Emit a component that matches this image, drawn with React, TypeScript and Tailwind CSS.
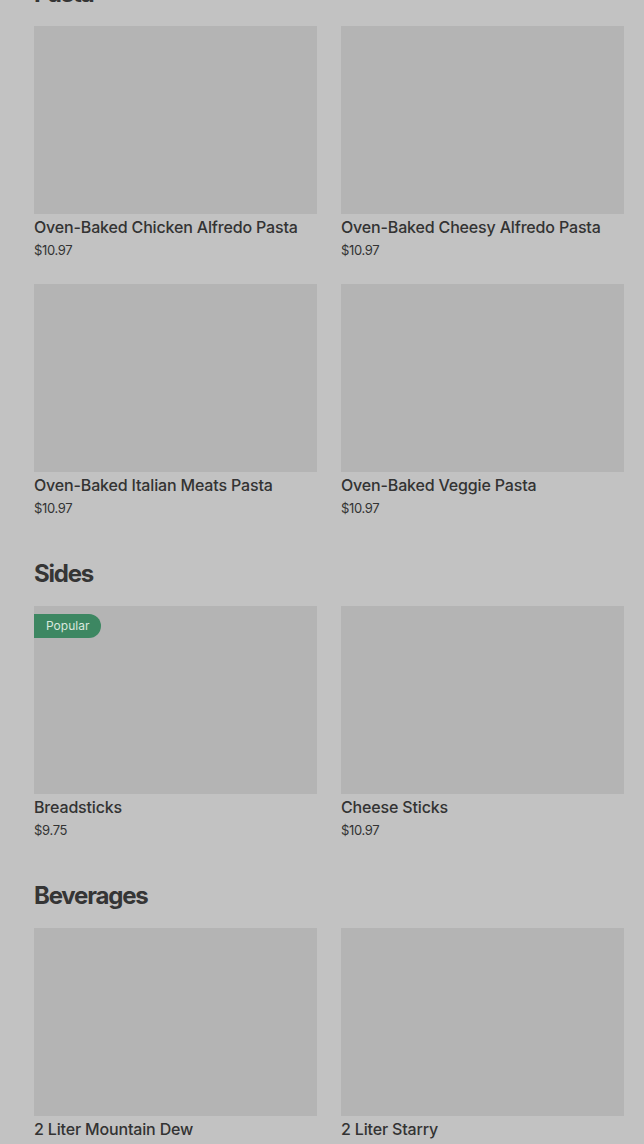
import React from "react";

type Item = { name: string; price: string; badge?: string };

const sections: { title: string; items: Item[] }[] = [
    {
        title: "Pasta",
        items: [
            { name: "Oven-Baked Chicken Alfredo Pasta", price: "$10.97" },
            { name: "Oven-Baked Cheesy Alfredo Pasta", price: "$10.97" },
            { name: "Oven-Baked Italian Meats Pasta", price: "$10.97" },
            { name: "Oven-Baked Veggie Pasta", price: "$10.97" },
        ],
    },
    {
        title: "Sides",
        items: [
            { name: "Breadsticks", price: "$9.75", badge: "Popular" },
            { name: "Cheese Sticks", price: "$10.97" },
        ],
    },
    {
        title: "Beverages",
        items: [
            { name: "2 Liter Mountain Dew", price: "$3.49" },
            { name: "2 Liter Starry", price: "$3.49" },
        ],
    },
];

function ItemCard({ item }: { item: Item }) {
    return (
        <div className="flex flex-col">
            <div className="relative h-[188px] bg-[#b4b4b4]">
                {item.badge && (
                    <span className="absolute left-0 top-2 h-6 pl-3 pr-3 flex items-center rounded-r-full bg-[#3d8762] text-[12px] text-[#d9e8de]">
                        {item.badge}
                    </span>
                )}
            </div>
            <p className="pt-[1px] text-base leading-6 font-medium text-[#333333] tracking-[-0.01em]">
                {item.name}
            </p>
            <p className="mt-[1px] text-[13px] leading-5 text-[#333333] tracking-tight">
                {item.price}
            </p>
        </div>
    );
}

export default function App() {
    return (
        <div className="w-[644px] h-[1144px] overflow-hidden bg-[#c2c2c2] font-['Inter',sans-serif]">
            <div className="-mt-[22px] pl-[34px] pr-[20px] flex flex-col gap-10">
                {sections.map((section) => (
                    <section key={section.title} className="flex flex-col gap-4">
                        <h2 className="text-2xl leading-8 font-bold text-[#353535] tracking-[-0.05em]">
                            {section.title}
                        </h2>
                        <div className="grid grid-cols-2 gap-x-6 gap-y-6">
                            {section.items.map((item) => (
                                <ItemCard key={item.name} item={item} />
                            ))}
                        </div>
                    </section>
                ))}
            </div>
        </div>
    );
}
